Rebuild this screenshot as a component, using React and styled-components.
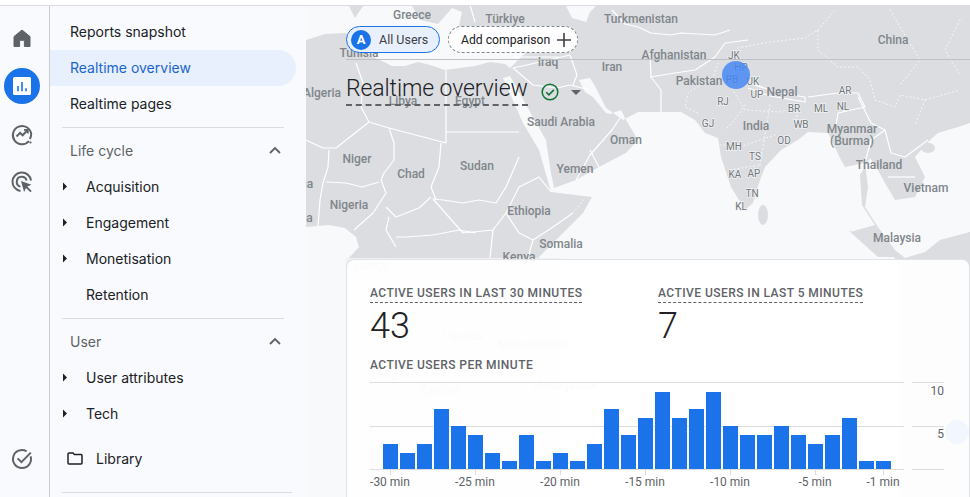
import React from 'react';
import styled, { createGlobalStyle } from 'styled-components';

const GlobalStyle = createGlobalStyle`
    html, body {
        margin: 0;
        height: 100%;
        overflow: hidden;
        background: #fff;
        font-family: Roboto, "Liberation Sans", sans-serif;
    }
    * { box-sizing: border-box; }
`;

const Page = styled.div`
    width: 970px;
    height: 497px;
    display: flex;
    flex-direction: column;
    overflow: hidden;
`;

const TopStrip = styled.div`
    height: 6px;
    flex: none;
    background: #fff;
    border-bottom: 1px solid #dadce0;
`;

const Body = styled.div`
    flex: 1;
    display: flex;
    min-height: 0;
`;

const Rail = styled.nav`
    width: 50px;
    flex: none;
    display: flex;
    flex-direction: column;
    padding: 8px 0 14px;
    background: #f8fafd;
    border-right: 1px solid #c9cbce;
`;

const RailSlot = styled.div`
    height: 48px;
    display: flex;
    align-items: center;
    justify-content: center;
    margin-top: ${props => props.$bottom ? 'auto' : '0'};
    padding-right: 5px;
`;

const RailActive = styled.div`
    width: 36px;
    height: 36px;
    border-radius: 50%;
    background: #1a73e8;
    display: flex;
    align-items: center;
    justify-content: center;
`;

const Sidebar = styled.aside`
    width: 256px;
    flex: none;
    padding-top: 8px;
    background: #f8fafd;
    overflow: hidden;
`;

const NavItem = styled.div`
    height: 36px;
    width: 246px;
    display: flex;
    align-items: center;
    padding: 0 0 2px 20px;
    font-size: 14px;
    font-family: Inter, Roboto, sans-serif;
    color: ${props => props.$active ? '#1a66d0' : '#202124'};
    background: ${props => props.$active ? '#e8f0fe' : 'transparent'};
    border-radius: 0 18px 18px 0;
`;

const SubItem = styled.div`
    height: 36px;
    display: flex;
    align-items: center;
    padding-bottom: 2px;
    font-size: 14px;
    font-family: Inter, Roboto, sans-serif;
    color: #202124;
`;

const CaretSlot = styled.span`
    width: 36px;
    flex: none;
    padding-left: 12px;
    display: flex;
`;

const SectionHead = styled.div`
    height: 36px;
    display: flex;
    align-items: center;
    justify-content: space-between;
    padding: 0 24px 2px 20px;
    font-size: 14px;
    font-family: Inter, Roboto, sans-serif;
    color: #5f6368;
`;

const Divider = styled.hr`
    border: 0;
    border-top: 1px solid #dadce0;
    margin: 5px 22px 5px 12px;
    height: 0;
    width: ${props => props.$wide ? '230px' : 'auto'};
`;

const LibraryRow = styled.div`
    height: 36px;
    margin-top: 9px;
    margin-bottom: 15px;
    display: flex;
    align-items: center;
    gap: 13px;
    padding: 0 0 2px 17px;
    font-size: 14px;
    font-family: Inter, Roboto, sans-serif;
    color: #202124;
`;

const Main = styled.main`
    flex: 1;
    position: relative;
    overflow: hidden;
    background: #f8f9fa;
    min-width: 0;
`;

const MapSvg = styled.svg`
    position: absolute;
    left: 0;
    top: 0;
    width: 664px;
    height: 491px;
`;

const CountryLabel = styled.text`
    font-family: Roboto, sans-serif;
    font-size: 12px;
    font-weight: 500;
    fill: ${props => props.$faint ? '#c4c7ca' : '#80868b'};
    text-anchor: middle;
`;

const StateLabel = styled.text`
    font-family: Roboto, sans-serif;
    font-size: 10px;
    fill: #70757a;
    text-anchor: middle;
    stroke: #f1f3f4;
    stroke-width: 1.5px;
    paint-order: stroke;
`;

const Overlay = styled.div`
    position: relative;
    margin-left: 40px;
`;

const ChipBar = styled.div`
    height: 54px;
    padding-top: 20px;
    display: flex;
    align-items: flex-start;
    gap: 8px;
    border-bottom: 1px solid #bdc1c6;
`;

const AudienceChip = styled.div`
    height: 27px;
    width: 94px;
    display: flex;
    align-items: center;
    gap: 8px;
    padding-left: 4px;
    border: 1.5px solid #1a73e8;
    border-radius: 14px;
    background: #e8f0fe;
    font-size: 12.5px;
    color: #3c4043;
`;

const Avatar = styled.span`
    width: 20px;
    height: 20px;
    flex: none;
    border-radius: 50%;
    background: #1a73e8;
    color: #fff;
    font-size: 13px;
    font-weight: 700;
    display: flex;
    align-items: center;
    justify-content: center;
`;

const AddChip = styled.div`
    height: 27px;
    width: 130px;
    display: flex;
    align-items: center;
    justify-content: space-between;
    padding: 0 6px 0 12px;
    border: 1px dashed #80868b;
    border-radius: 14px;
    background: #fff;
    font-size: 12.2px;
    color: #202124;
`;

const TitleRow = styled.div`
    height: 46px;
    padding-top: 14px;
    display: flex;
    align-items: flex-start;
    gap: 13px;
`;

const Title = styled.h1`
    margin: 0;
    font-size: 23px;
    font-weight: 300;
    line-height: 30px;
    letter-spacing: -0.1px;
    color: #202124;
    border-bottom: 2px dashed #5f6368;
    height: 32px;
    font-family: Roboto, sans-serif;
`;

const TitleIcons = styled.div`
    display: flex;
    align-items: center;
    gap: 12px;
    height: 36px;
`;

const Card = styled.section`
    margin-top: 153px;
    height: 260px;
    padding: 22px 0 0 23px;
    border: 1px solid #e1e3e6;
    border-bottom: 0;
    border-radius: 8px 8px 0 0;
    background: rgba(255, 255, 255, 0.93);
`;

const Metrics = styled.div`
    display: flex;
`;

const Metric = styled.div`
    width: 288px;
`;

const MetricLabel = styled.span`
    display: inline-block;
    font-size: 12px;
    font-weight: 500;
    line-height: 16px;
    letter-spacing: 0.45px;
    color: #5f6368;
    padding-bottom: 1px;
    border-bottom: ${props => props.$plain ? '0' : '1px dashed #5f6368'};
`;

const MetricValue = styled.div`
    font-size: 36px;
    font-weight: 300;
    line-height: 46px;
    color: #202124;
`;

const ChartTitle = styled(MetricLabel)`
    margin-top: 8px;
`;

const ChartSvg = styled.svg`
    display: block;
    margin-top: 7px;
    width: 600px;
    height: 118px;
`;

const AxisText = styled.text`
    font-family: Roboto, sans-serif;
    font-size: 12px;
    fill: #5f6368;
    text-anchor: ${props => props.$end ? 'end' : 'middle'};
`;

const HomeIcon = () => (
    <svg width="24" height="24" viewBox="0 0 24 24" fill="#5f6368">
        <path d="M4 20.5V10.6L12 4l8 6.6v9.9h-5.6v-6.2H9.6v6.2z" stroke="#5f6368" strokeWidth="1" strokeLinejoin="round" />
    </svg>
);

const ReportsIcon = () => (
    <svg width="20" height="20" viewBox="0 0 20 20">
        <rect x="1" y="1" width="18" height="18" rx="1.5" fill="#fff" />
        <path d="M6 10v5.2M10 6v9.2M14 12.2v3" stroke="#1a73e8" strokeWidth="1.6" />
    </svg>
);

const ExploreIcon = () => (
    <svg width="24" height="24" viewBox="0 0 24 24" fill="none" stroke="#5f6368" strokeWidth="2">
        <path d="M19 19.2A9.2 9.2 0 1 1 21.2 12c0 2-.5 3.6-1.4 5" />
        <path d="M6.5 14.5l3.6-3.6 2.6 2.4 4.6-5" strokeWidth="2" />
        <path d="M14 7.8h3.8v3.8" strokeWidth="1.8" />
        <circle cx="20.5" cy="20.5" r="1.1" fill="#5f6368" stroke="none" />
    </svg>
);

const TargetIcon = () => (
    <svg width="24" height="24" viewBox="0 0 24 24" fill="none" stroke="#5f6368" strokeWidth="2">
        <path d="M21 10.5A9.3 9.3 0 1 0 10.5 21" />
        <path d="M16.6 10.5A5 5 0 1 0 10.5 16.6" />
        <path d="M11 11l10.5 3.7-4.2 1.9 4.4 4.4-1.3 1.3-4.4-4.4-1.9 4.2z" fill="#5f6368" stroke="none" />
    </svg>
);

const TaskIcon = () => (
    <svg width="24" height="24" viewBox="0 0 24 24" fill="none" stroke="#5f6368" strokeWidth="2">
        <path d="M20.6 9.4A9 9 0 1 1 16.6 4.3" />
        <path d="M7.6 11.4l3.8 3.8 9.4-9.6" />
    </svg>
);

const Caret = () => (
    <svg width="6" height="9" viewBox="0 0 6 9"><path d="M1 .5l4 4-4 4z" fill="#202124" /></svg>
);

const Chevron = () => (
    <svg width="14" height="9" viewBox="0 0 14 9" fill="none" stroke="#5f6368" strokeWidth="1.8"><path d="M2 7l5-5 5 5" /></svg>
);

const FolderIcon = () => (
    <svg width="16" height="13" viewBox="0 0 16 13" fill="none" stroke="#202124" strokeWidth="1.5">
        <path d="M1 2.2c0-.7.4-1.2 1-1.2h4l1.4 1.6H14c.6 0 1 .5 1 1.1V11c0 .6-.4 1-1 1H2c-.6 0-1-.4-1-1z" />
    </svg>
);

const PlusIcon = () => (
    <svg width="14" height="14" viewBox="0 0 14 14" stroke="#3c4043" strokeWidth="1.6"><path d="M7 0v14M0 7h14" /></svg>
);

const GreenCheck = () => (
    <svg width="18" height="18" viewBox="0 0 18 18" fill="none" stroke="#137333" strokeWidth="1.5">
        <circle cx="9" cy="9" r="7.8" />
        <path d="M5.2 9.2l2.7 2.7 5-5" strokeWidth="1.6" />
    </svg>
);

const DownCaret = () => (
    <svg width="10" height="5" viewBox="0 0 10 5"><path d="M0 0h10L5 5z" fill="#5f6368" /></svg>
);

const countries = [
    ['Greece', 412, 19], ['Türkiye', 505, 23], ['Turkmenistan', 641, 23], ['China', 893, 44],
    ['Afghanistan', 674, 59], ['Pakistan', 699, 85], ['Iraq', 548, 66], ['Iran', 612, 71],
    ['Tunisia', 359, 57], ['Algeria', 322, 97], ['Libya', 403, 105], ['Egypt', 470, 105],
    ['Saudi Arabia', 561, 126], ['Oman', 626, 144], ['Niger', 357, 163], ['Chad', 411, 178],
    ['Sudan', 477, 170], ['Yemen', 575, 173], ['Nigeria', 349, 209], ['Ethiopia', 529, 215],
    ['Somalia', 561, 248], ['Kenya', 519, 261], ['Ghana', 296, 188], ['Guinea', 294, 222],
    ['Nepal', 782, 96], ['India', 756, 130], ['Myanmar', 852, 133], ['(Burma)', 852, 145],
    ['Thailand', 879, 169], ['Vietnam', 926, 192], ['Malaysia', 897, 242],
];

const hiddenCountries = [
    ['Uganda', 463, 340], ['Mozambique', 533, 348], ['Angola', 395, 377], ['Zambia', 440, 394], ['Madagascar', 565, 389], ['Congo', 372, 269],
];

const states = [
    ['JK', 734, 59], ['HP', 741, 71], ['PB', 732, 83], ['UK', 753, 85], ['UP', 757, 98], ['RJ', 723, 105],
    ['GJ', 708, 127], ['BR', 794, 112], ['ML', 821, 112], ['NL', 843, 110], ['AR', 845, 94], ['WB', 801, 128],
    ['OD', 784, 144], ['MH', 734, 150], ['TS', 755, 160], ['KA', 735, 178], ['AP', 754, 177], ['TN', 752, 197], ['KL', 741, 210],
];

const borders = [
    'M356 63L363 83 361 107 369 122 389 128 446 143',
    'M446 70V132H519M446 132V143',
    'M369 122L336 148 323 148 306 140',
    'M389 128L394 143 394 160 384 173 381 180 386 193 373 213 354 230',
    'M329 150L328 167 323 183 320 200 318 226M326 182L346 183 362 187 379 182',
    'M441 143L439 167 431 187 436 200',
    'M386 207L396 217 419 208 431 197',
    'M389 217L386 230 396 247M396 237L406 237 433 235 459 230 476 233',
    'M433 199L443 200 463 203 479 200 496 203 506 187 519 157',
    'M433 199L463 233 493 230 506 213 519 187 539 177 551 192',
    'M506 213L519 233 533 240 553 227 573 213',
    'M533 240L528 258M493 230L490 258',
    'M513 57H559M513 68L527 65 570 55 577 75 573 85M513 68L533 85 557 88 570 85',
    'M570 85L590 90M638 27L651 33 671 35 681 33 715 35 730 30',
    'M650 53L651 77 661 90 661 100 661 112M650 77L675 73 695 70 715 57 725 43 748 40',
    'M638 27L625 24 612 10',
    'M576 180L590 155 612 130 620 118M599 167L590 150',
    'M748 83L780 93 805 97 805 102 770 96 748 88',
    'M808 97L838 93 858 93 865 107 838 113 835 132',
    'M858 97L871 123 885 130 891 153 905 157 928 140M865 163L871 140 885 130',
    'M888 177H915',
    'M505 40L520 50 545 45M470 5L475 22',
];

const dotted = [
    'M718 63L713 77 688 93 685 107 698 113',
    'M738 48L770 42 805 38 818 30 818 50 838 67 858 67 870 80 875 100 895 107 900 95 925 100 960 90',
    'M818 30L835 10M890 10L905 35 920 60 900 85M960 20L945 50 960 75M925 100L915 125',
    'M745 105L735 120 725 130M770 105L765 135 760 165M720 145L745 145 775 135M730 170L760 165M800 100L795 125',
    'M730 85L745 110 780 112 800 105',
    'M573 213L585 198',
];

const MapLayer = () => (
    <MapSvg viewBox="306 6 664 491">
        <rect x="306" y="6" width="664" height="491" fill="#dbdde0" />
        {/* mediterranean */}
        <path fill="#f8f9fa" d="M306 6H349L355 18 363 6H412L420 20 438 24 452 8 462 12 458 30 470 38 500 42 525 44 532 48 522 56 516 62 510 68 505 64 490 62 475 66 460 68 445 70 430 65 418 62 405 66 392 66 380 60 368 55 362 52 358 40 345 33 325 34 306 40Z" />
        {/* indian ocean and red sea */}
        <path fill="#f8f9fa" d="M503 78L510 76 529 110 546 140 551 173 554 188 576 180 599 167 626 153 638 140 626 120 621 110 610 114 606 113 593 97 585 92 579 80 590 78 596 88 606 108 623 120 638 112H681L695 120 705 133 718 138 721 157 731 187 745 210 753 203 760 180 765 167 781 150 798 140 808 132 828 133 841 160 845 167 865 163 868 187 865 207 878 227 895 250 905 258 925 252 940 240 970 232V123L958 127 938 133 930 140 915 157 925 177 915 197 895 200 885 183 875 165 870 158 860 175 862 205 875 225 850 232 880 250 895 258 900 270V497H560L539 257 566 230 583 213 592 197 551 192 539 150 523 123Z" />
        {/* gulf of guinea and south atlantic */}
        <path fill="#f8f9fa" d="M306 227L329 225 345 228 356 237 359 247 349 258 346 300V497H306Z" />
        {/* caspian */}
        <path fill="#f8f9fa" d="M556 6H566L572 18 586 22 590 12 596 6H600V6Z" />
        <ellipse cx="763" cy="215" rx="5" ry="10" fill="#dbdde0" />
        <ellipse cx="928" cy="148" rx="7" ry="5" fill="#dbdde0" />
        <path d="M848 230L868 240 895 257H878Z" fill="#dbdde0" />
        <path d="M938 258L950 240 970 232V258Z" fill="#dbdde0" />
        <rect x="346" y="258" width="215" height="239" fill="#f0f1f2" />
        <g fill="none" stroke="#fff" strokeWidth="1.2" strokeLinejoin="round">
            {borders.map(d => <path key={d} d={d} />)}
        </g>
        <g fill="none" stroke="#fff" strokeOpacity="0.8" strokeWidth="1" strokeDasharray="1 3" strokeLinecap="round">
            {dotted.map(d => <path key={d} d={d} />)}
        </g>
        {countries.map(([name, x, y]) => <CountryLabel key={name} x={x} y={y}>{name}</CountryLabel>)}
        {hiddenCountries.map(([name, x, y]) => <CountryLabel $faint key={name} x={x} y={y}>{name}</CountryLabel>)}
        {states.map(([name, x, y]) => <StateLabel key={name} x={x} y={y}>{name}</StateLabel>)}
        <circle cx="736" cy="75" r="14" fill="#4285f4" fillOpacity="0.82" />
        <circle cx="957" cy="432" r="12" fill="#4285f4" />
    </MapSvg>
);

const perMinute = [3, 2, 3, 7, 5, 4, 2, 1, 4, 1, 2, 1, 3, 7, 4, 6, 9, 6, 7, 9, 5, 4, 4, 5, 4, 3, 4, 6, 1, 1];
const barHeights = { 1: 8, 2: 16, 3: 25, 4: 34, 5: 43, 6: 51, 7: 60, 9: 77 };
const ticks = [['-30 min', 390], ['-25 min', 475], ['-20 min', 560], ['-15 min', 645], ['-10 min', 730], ['-5 min', 815], ['-1 min', 883]];

const Chart = () => (
    <ChartSvg viewBox="370 381 600 118">
        <g stroke="#dadce0" strokeWidth="1">
            <path d="M370 382.5H904M912 382.5H944" />
            <path d="M370 426.5H904M912 426.5H944" />
            <path d="M370 469.5H904M912 469.5H944" />
        </g>
        {perMinute.map((value, i) => (
            <rect key={i} x={383 + i * 17} y={469 - barHeights[value]} width="15" height={barHeights[value]} fill="#1a73e8" />
        ))}
        {ticks.map(([label, x]) => (
            <g key={label}>
                <path d={`M${x + 0.5} 470V475`} stroke="#dadce0" />
                <AxisText x={x} y={486}>{label}</AxisText>
            </g>
        ))}
        <AxisText $end x={944} y={395}>10</AxisText>
        <AxisText $end x={944} y={438}>5</AxisText>
    </ChartSvg>
);

const App = () => {
    return (
        <Page>
            <GlobalStyle />
            <TopStrip />
            <Body>
                <Rail>
                    <RailSlot><HomeIcon /></RailSlot>
                    <RailSlot><RailActive><ReportsIcon /></RailActive></RailSlot>
                    <RailSlot><ExploreIcon /></RailSlot>
                    <RailSlot><TargetIcon /></RailSlot>
                    <RailSlot $bottom><TaskIcon /></RailSlot>
                </Rail>
                <Sidebar>
                    <NavItem>Reports snapshot</NavItem>
                    <NavItem $active>Realtime overview</NavItem>
                    <NavItem>Realtime pages</NavItem>
                    <Divider />
                    <SectionHead>Life cycle <Chevron /></SectionHead>
                    <SubItem><CaretSlot><Caret /></CaretSlot>Acquisition</SubItem>
                    <SubItem><CaretSlot><Caret /></CaretSlot>Engagement</SubItem>
                    <SubItem><CaretSlot><Caret /></CaretSlot>Monetisation</SubItem>
                    <SubItem><CaretSlot />Retention</SubItem>
                    <Divider />
                    <SectionHead>User <Chevron /></SectionHead>
                    <SubItem><CaretSlot><Caret /></CaretSlot>User attributes</SubItem>
                    <SubItem><CaretSlot><Caret /></CaretSlot>Tech</SubItem>
                    <LibraryRow><FolderIcon />Library</LibraryRow>
                    <Divider $wide />
                </Sidebar>
                <Main>
                    <MapLayer />
                    <Overlay>
                        <ChipBar>
                            <AudienceChip><Avatar>A</Avatar>All Users</AudienceChip>
                            <AddChip>Add comparison <PlusIcon /></AddChip>
                        </ChipBar>
                        <TitleRow>
                            <Title>Realtime overview</Title>
                            <TitleIcons><GreenCheck /><DownCaret /></TitleIcons>
                        </TitleRow>
                        <Card>
                            <Metrics>
                                <Metric>
                                    <MetricLabel>ACTIVE USERS IN LAST 30 MINUTES</MetricLabel>
                                    <MetricValue>43</MetricValue>
                                </Metric>
                                <Metric>
                                    <MetricLabel>ACTIVE USERS IN LAST 5 MINUTES</MetricLabel>
                                    <MetricValue>7</MetricValue>
                                </Metric>
                            </Metrics>
                            <ChartTitle $plain>ACTIVE USERS PER MINUTE</ChartTitle>
                            <Chart />
                        </Card>
                    </Overlay>
                </Main>
            </Body>
        </Page>
    );
};

export default App;
